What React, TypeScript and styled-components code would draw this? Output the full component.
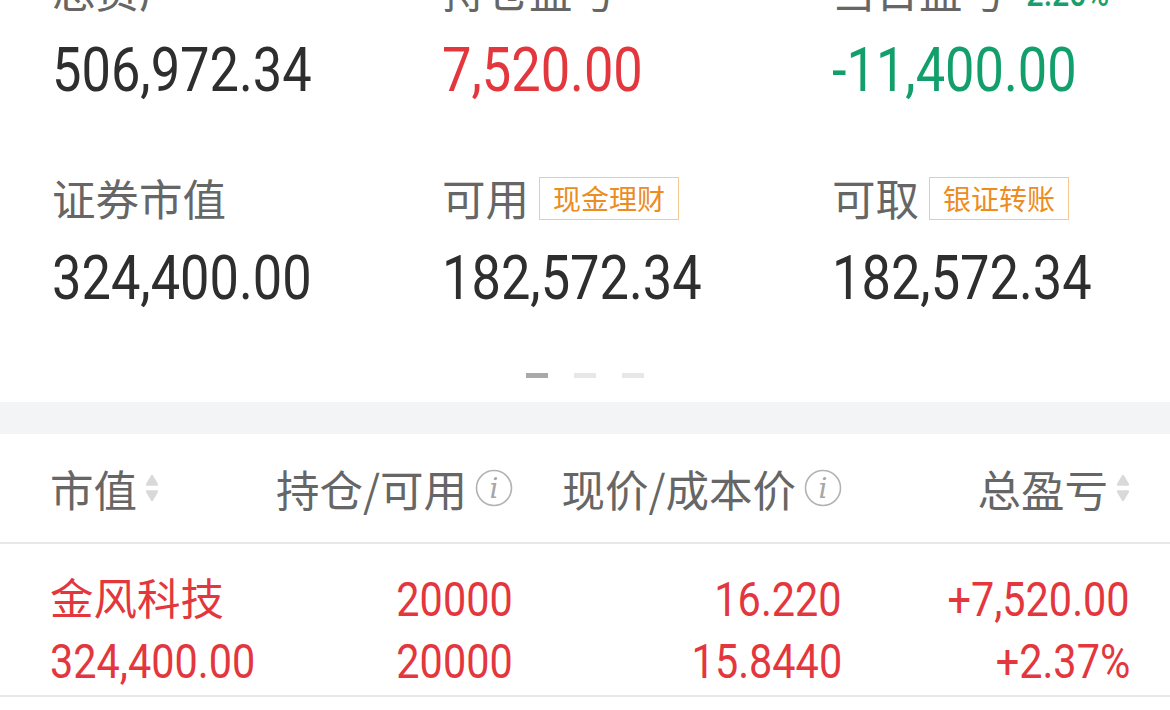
import React from 'react';
import styled, { createGlobalStyle, css } from 'styled-components';

const CJK = `"Noto Sans CJK SC", "Noto Sans", sans-serif`;
const NUM = `Roboto, "Noto Sans CJK SC", sans-serif`;

const GlobalStyle = createGlobalStyle`
  html, body { margin: 0; padding: 0; background: #fff; overflow: hidden; }
  body { font-family: ${CJK}; -webkit-font-smoothing: antialiased; }
`;

const Page = styled.div`
  width: 1170px;
  height: 710px;
  overflow: hidden;
  display: flex;
  flex-direction: column;
  background: #fff;
`;

const Summary = styled.section`
  display: grid;
  grid-template-columns: repeat(3, 1fr);
  row-gap: 67px;
  margin-top: -36px;
`;

const Cell = styled.div`
  padding-left: 52px;
  display: flex;
  flex-direction: column;
`;

const LabelRow = styled.div`
  height: 52px;
  display: flex;
  align-items: center;
  gap: 10px;
`;

const Label = styled.span`
  font-family: ${CJK};
  font-size: 43.5px;
  line-height: 52px;
  color: #666;
  white-space: nowrap;
`;

const Badge = styled.span`
  font-family: ${CJK};
  font-size: 28px;
  line-height: 41px;
  height: 41px;
  padding: 0 13px;
  border: 1px solid #f5c98f;
  color: #ec8c21;
  white-space: nowrap;
`;

/* condensed digits, DIN-like */
const Num = styled.span<{ $origin?: 'left' | 'right' }>`
  display: block;
  font-family: ${NUM};
  font-weight: 400;
  white-space: nowrap;
  transform: scaleX(0.845);
  transform-origin: ${(p) => p.$origin ?? 'left'} center;
`;

const Pct = styled(Num)`
  font-size: 36px;
  font-weight: 500;
  color: #17a06c;
  align-self: flex-end;
  line-height: 44px;
`;

type Tone = 'plain' | 'up' | 'down';
const toneColor = (t?: Tone) => (t === 'up' ? '#e3373d' : t === 'down' ? '#139f6b' : '#2e2e2e');

const Value = styled.div<{ $tone?: Tone }>`
  display: flex;
  margin-top: 19px;
  height: 70px;
  font-size: 62px;
  line-height: 70px;
  color: ${(p) => toneColor(p.$tone)};
`;

const Dots = styled.div`
  display: flex;
  justify-content: center;
  gap: 26px;
  margin-top: 60px;
  margin-bottom: 24px;
`;

const Dot = styled.span<{ $active?: boolean }>`
  width: 22px;
  height: 5px;
  background: ${(p) => (p.$active ? '#a9a9a9' : '#e7e7e7')};
`;

const Band = styled.div`
  height: 32px;
  background: #f3f4f6;
`;

const gridCols = css`
  display: grid;
  grid-template-columns: 200px 263px 329px 288px;
  padding: 0 40px 0 50px;
`;

const HeaderRow = styled.div`
  ${gridCols};
  height: 108px;
  align-items: center;
  border-bottom: 2px solid #e8e8ec;
`;

const HeadCell = styled.div<{ $right?: boolean }>`
  display: flex;
  align-items: center;
  justify-content: ${(p) => (p.$right ? 'flex-end' : 'flex-start')};
  gap: 8px;
  font-family: ${CJK};
  font-size: 43.5px;
  color: #666;
  white-space: nowrap;
`;

const DataRow = styled.div`
  ${gridCols};
  padding-top: 25px;
  padding-bottom: 2px;
  border-bottom: 2px solid #e8e8ec;
`;

const DataCell = styled.div<{ $right?: boolean }>`
  display: flex;
  flex-direction: column;
  align-items: ${(p) => (p.$right ? 'flex-end' : 'flex-start')};
  color: #e3373d;
`;

const DataLine = styled.div`
  display: flex;
  height: 62px;
  font-size: 49px;
  line-height: 62px;
  white-space: nowrap;
`;

const NameLine = styled(DataLine)`
  font-family: ${CJK};
  font-size: 43.5px;
  line-height: 56px;
`;

const SortIcon = () => (
  <svg width="14" height="28" viewBox="0 0 14 28">
    <path d="M7 2 L12 10.5 H2 Z" fill="#d9d9d9" stroke="#d9d9d9" strokeWidth="2.4" strokeLinejoin="round" />
    <path d="M7 26 L12 17.5 H2 Z" fill="#d9d9d9" stroke="#d9d9d9" strokeWidth="2.4" strokeLinejoin="round" />
  </svg>
);

const InfoIcon = () => (
  <svg width="38" height="38" viewBox="0 0 38 38">
    <circle cx="19" cy="19" r="17.5" fill="none" stroke="#b3b3b3" strokeWidth="1.6" />
    <text
      x="19"
      y="29"
      textAnchor="middle"
      fontFamily='"DejaVu Serif", "Liberation Serif", serif'
      fontStyle="italic"
      fontSize="28"
      fill="#a6a6a6"
    >
      i
    </text>
  </svg>
);

export default function App() {
  return (
    <Page>
      <GlobalStyle />
      <Summary>
        <Cell>
          <LabelRow>
            <Label>总资产</Label>
          </LabelRow>
          <Value>
            <Num>506,972.34</Num>
          </Value>
        </Cell>
        <Cell>
          <LabelRow>
            <Label>持仓盈亏</Label>
          </LabelRow>
          <Value $tone="up">
            <Num>7,520.00</Num>
          </Value>
        </Cell>
        <Cell>
          <LabelRow>
            <Label>当日盈亏</Label>
            <Pct>-2.20%</Pct>
          </LabelRow>
          <Value $tone="down">
            <Num>-11,400.00</Num>
          </Value>
        </Cell>
        <Cell>
          <LabelRow>
            <Label>证券市值</Label>
          </LabelRow>
          <Value>
            <Num>324,400.00</Num>
          </Value>
        </Cell>
        <Cell>
          <LabelRow>
            <Label>可用</Label>
            <Badge>现金理财</Badge>
          </LabelRow>
          <Value>
            <Num>182,572.34</Num>
          </Value>
        </Cell>
        <Cell>
          <LabelRow>
            <Label>可取</Label>
            <Badge>银证转账</Badge>
          </LabelRow>
          <Value>
            <Num>182,572.34</Num>
          </Value>
        </Cell>
      </Summary>

      <Dots>
        <Dot $active />
        <Dot />
        <Dot />
      </Dots>
      <Band />

      <HeaderRow>
        <HeadCell>
          市值
          <SortIcon />
        </HeadCell>
        <HeadCell $right>
          持仓/可用
          <InfoIcon />
        </HeadCell>
        <HeadCell $right>
          现价/成本价
          <InfoIcon />
        </HeadCell>
        <HeadCell $right>
          总盈亏
          <SortIcon />
        </HeadCell>
      </HeaderRow>

      <DataRow>
        <DataCell>
          <NameLine>金风科技</NameLine>
          <DataLine>
            <Num>324,400.00</Num>
          </DataLine>
        </DataCell>
        <DataCell $right>
          <DataLine>
            <Num $origin="right">20000</Num>
          </DataLine>
          <DataLine>
            <Num $origin="right">20000</Num>
          </DataLine>
        </DataCell>
        <DataCell $right>
          <DataLine>
            <Num $origin="right">16.220</Num>
          </DataLine>
          <DataLine>
            <Num $origin="right">15.8440</Num>
          </DataLine>
        </DataCell>
        <DataCell $right>
          <DataLine>
            <Num $origin="right">+7,520.00</Num>
          </DataLine>
          <DataLine>
            <Num $origin="right">+2.37%</Num>
          </DataLine>
        </DataCell>
      </DataRow>
    </Page>
  );
}
